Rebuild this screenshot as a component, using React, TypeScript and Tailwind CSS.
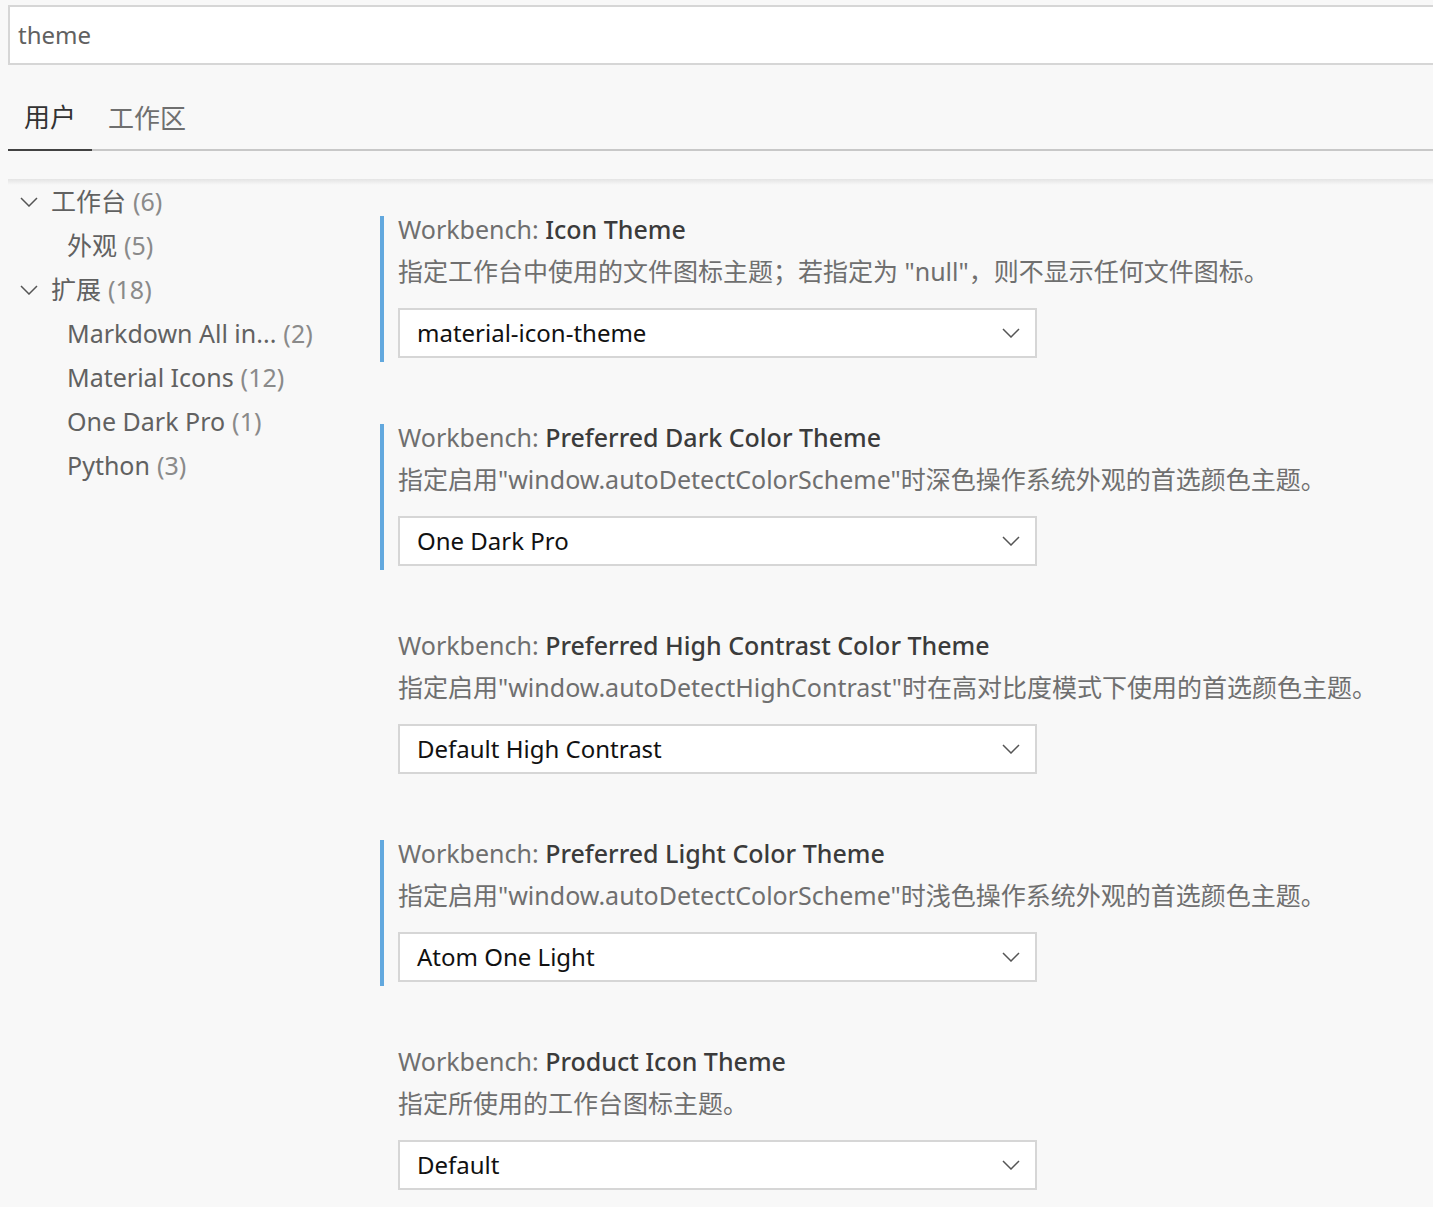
import { ReactNode } from "react"

const font = { fontFamily: '"Noto Sans", "Noto Sans CJK SC", sans-serif' }

type TreeItem = {
  label: string
  count: number
  level: 0 | 1
}

const tree: TreeItem[] = [
  { label: "工作台", count: 6, level: 0 },
  { label: "外观", count: 5, level: 1 },
  { label: "扩展", count: 18, level: 0 },
  { label: "Markdown All in...", count: 2, level: 1 },
  { label: "Material Icons", count: 12, level: 1 },
  { label: "One Dark Pro", count: 1, level: 1 },
  { label: "Python", count: 3, level: 1 },
]

type Setting = {
  name: string
  description: ReactNode
  value: string
  modified: boolean
}

const settings: Setting[] = [
  {
    name: "Icon Theme",
    description: '指定工作台中使用的文件图标主题；若指定为 "null"，则不显示任何文件图标。',
    value: "material-icon-theme",
    modified: true,
  },
  {
    name: "Preferred Dark Color Theme",
    description: '指定启用"window.autoDetectColorScheme"时深色操作系统外观的首选颜色主题。',
    value: "One Dark Pro",
    modified: true,
  },
  {
    name: "Preferred High Contrast Color Theme",
    description: '指定启用"window.autoDetectHighContrast"时在高对比度模式下使用的首选颜色主题。',
    value: "Default High Contrast",
    modified: false,
  },
  {
    name: "Preferred Light Color Theme",
    description: '指定启用"window.autoDetectColorScheme"时浅色操作系统外观的首选颜色主题。',
    value: "Atom One Light",
    modified: true,
  },
  {
    name: "Product Icon Theme",
    description: "指定所使用的工作台图标主题。",
    value: "Default",
    modified: false,
  },
]

const Chevron = ({ className }: { className?: string }) => (
  <svg className={className} viewBox="0 0 18 10" fill="none">
    <path d="M1 1 L9 9 L17 1" stroke="#555" strokeWidth="1.5" />
  </svg>
)

const App = () => {
  return (
    <div className="w-[1433px] h-[1207px] overflow-hidden bg-[#f8f8f8]" style={font}>
      <div className="pl-2 pt-[5px]">
        <div className="h-[60px] border-2 border-r-0 border-[#d6d6d6] bg-white flex items-center pl-[8px] text-[24px] text-[#616161]">
          theme
        </div>

        <div className="mt-[25px] flex border-b-2 border-[#c8c8c8] h-[61px]">
          <div className="w-[84px] -mb-[2px] pb-[4px] border-b-2 border-[#424242] flex items-center pl-4 text-[26px] text-[#333]">
            用户
          </div>
          <div className="flex items-center pb-[2px] pl-4 text-[26px] text-[#6f6f6f]">工作区</div>
        </div>

        <div className="mt-[28px] h-[6px] bg-gradient-to-b from-[#e4e4e4] to-[#f8f8f8]" />

        <div className="flex -mt-[6px]">
          <div className="w-[372px] shrink-0 pt-px">
            {tree.map((item) => (
              <div
                key={item.label}
                className={`h-[44px] flex items-center text-[25px] whitespace-nowrap ${
                  item.level === 0 ? "pl-[12px]" : "pl-[59px]"
                }`}
              >
                {item.level === 0 && <Chevron className="w-[18px] h-[10px] mr-[13px]" />}
                <span className="text-[#616161]">{item.label}</span>
                <span className="ml-[7px] text-[#8a8a8a]">({item.count})</span>
              </div>
            ))}
          </div>

          <div className="flex-1 pt-[37px]">
            {settings.map((s) => (
              <div
                key={s.name}
                className={`mb-[62px] pl-[14px] pt-0 pb-[4px] border-l-4 ${
                  s.modified ? "border-[#62a8de]" : "border-transparent"
                }`}
              >
                <div className="h-[28px] flex items-center text-[25px] whitespace-nowrap">
                  <span className="text-[#6f6f6f]">Workbench:&nbsp;</span>
                  <span className="font-medium text-[#3b3b3b]">{s.name}</span>
                </div>
                <div className="mt-[14px] h-[28px] flex items-center text-[25px] text-[#6f6f6f] whitespace-nowrap">
                  {s.description}
                </div>
                <div className="mt-[22px] w-[639px] h-[50px] border-2 border-[#d6d6d6] bg-white flex items-center justify-between pl-[17px] pr-[15px]">
                  <span className="text-[24px] text-[#111]">{s.value}</span>
                  <Chevron className="w-[18px] h-[10px]" />
                </div>
              </div>
            ))}
          </div>
        </div>
      </div>
    </div>
  )
}

export default App
